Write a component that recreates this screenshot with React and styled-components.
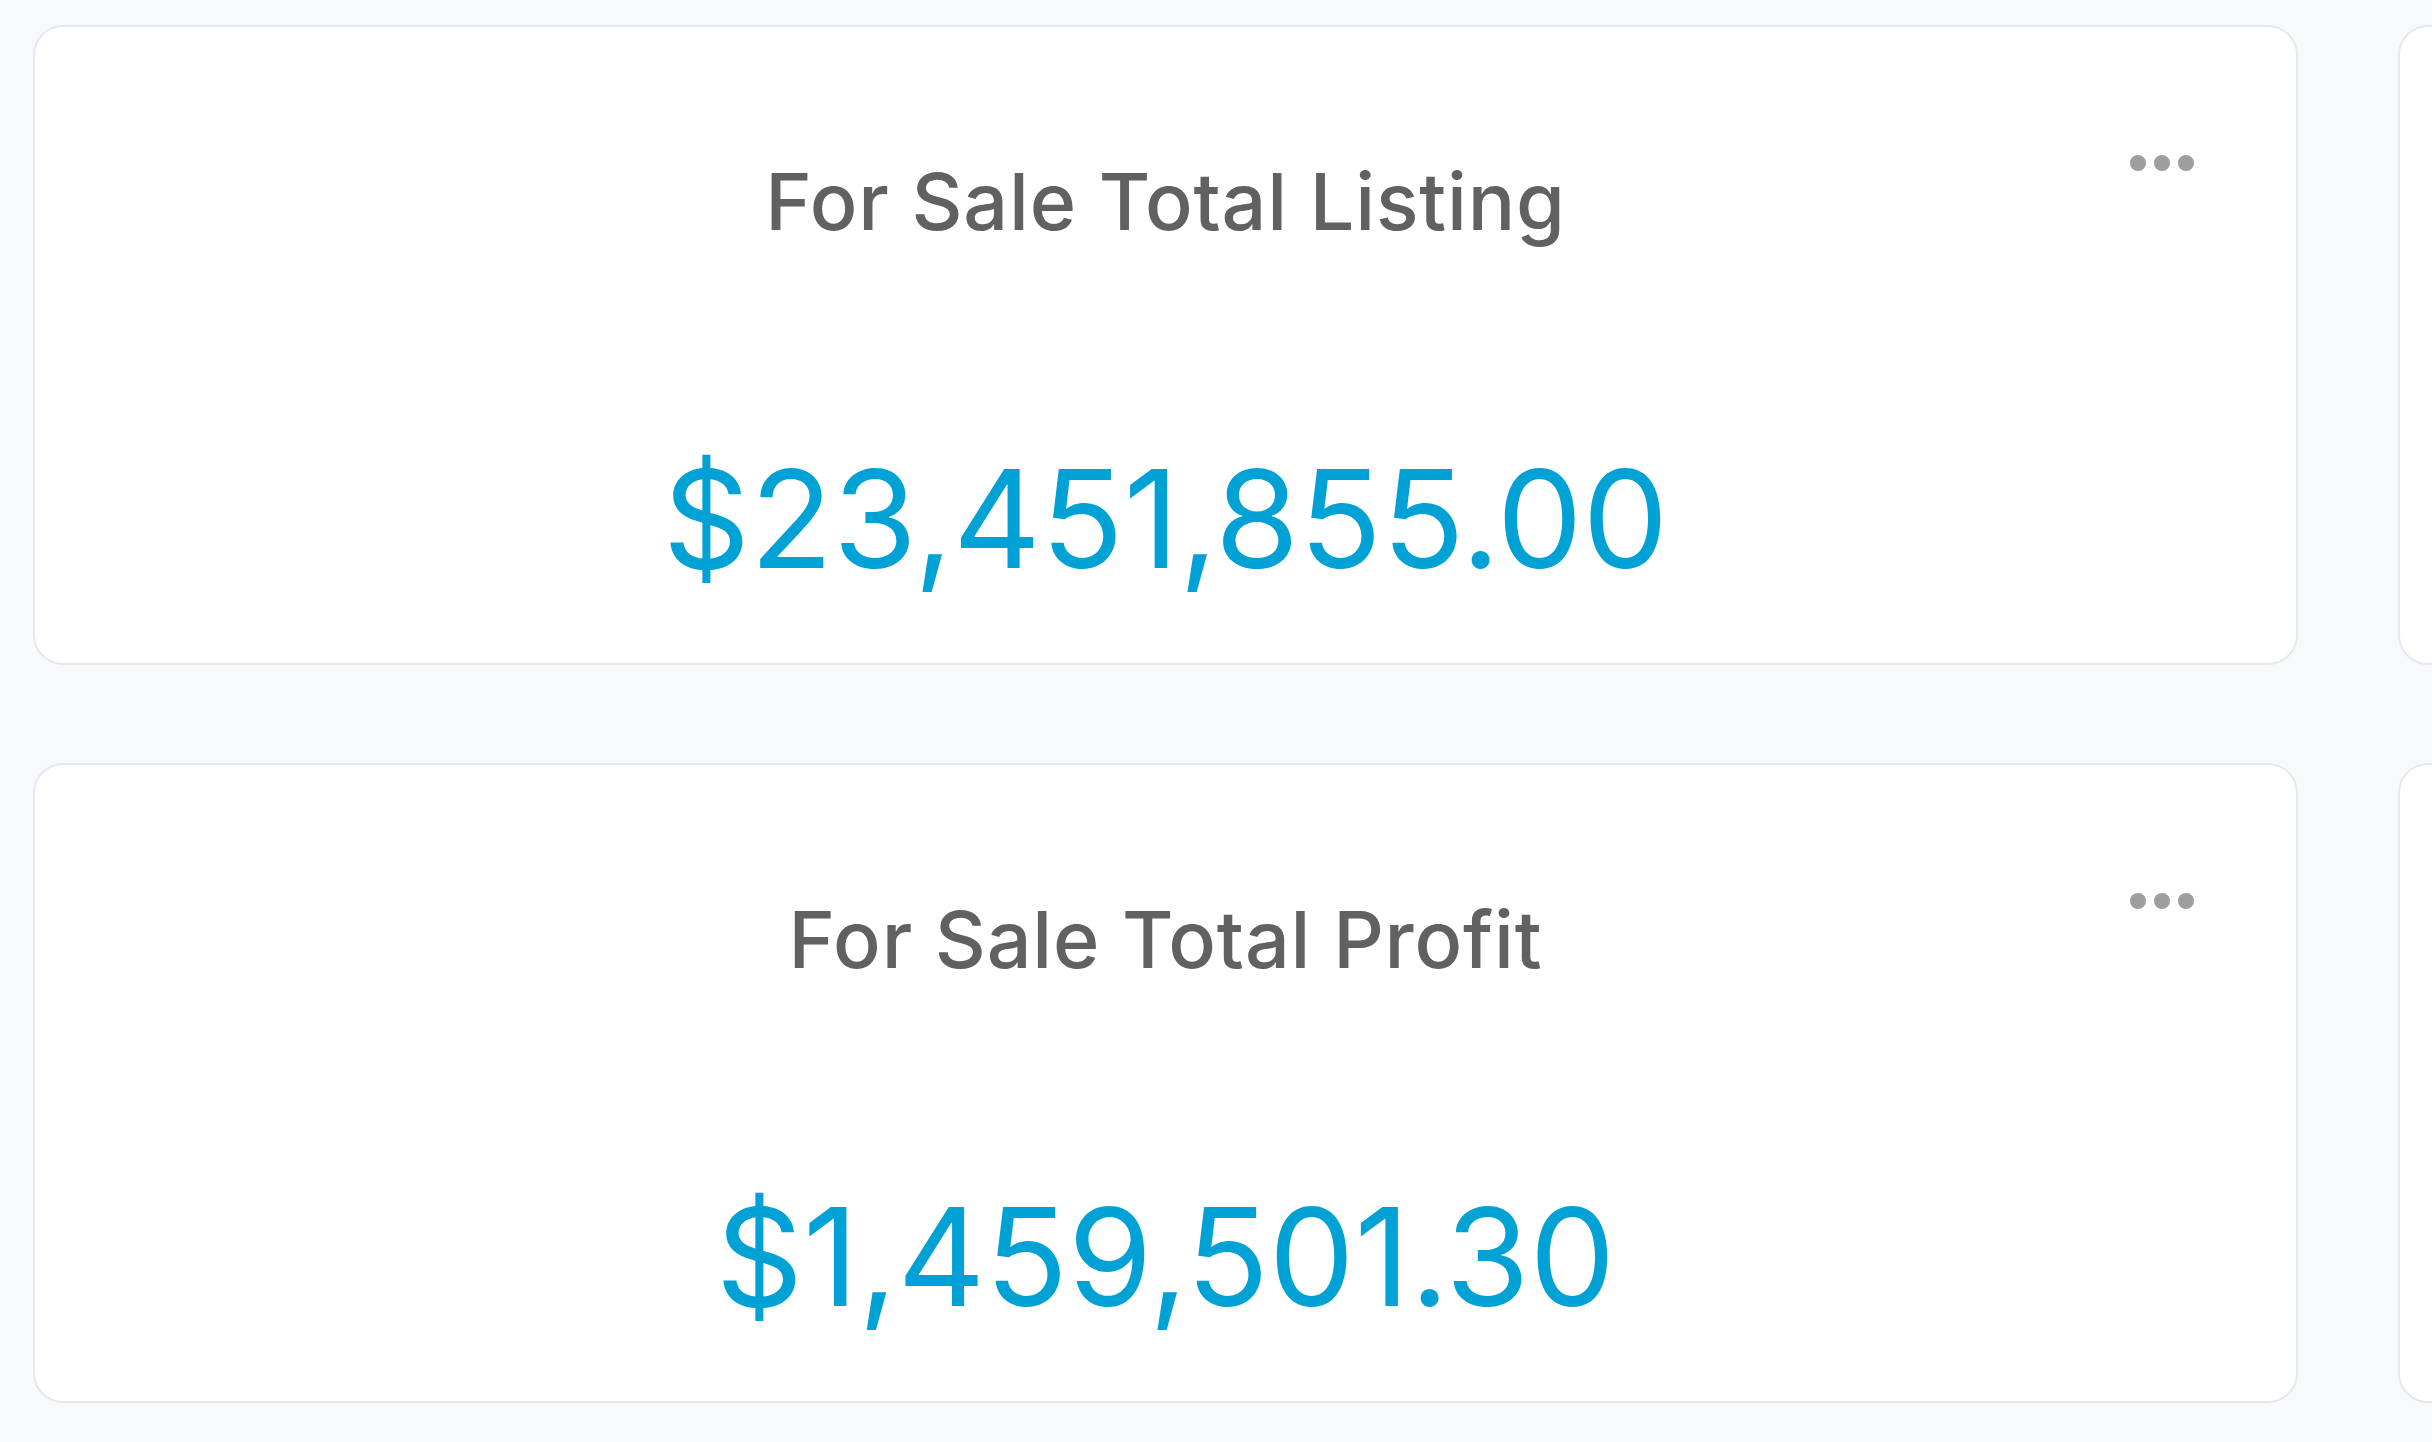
import React from "react";
import styled, { createGlobalStyle } from "styled-components";

const GlobalStyle = createGlobalStyle`
  html, body {
    margin: 0;
    padding: 0;
    background: #f8f9fb;
    overflow: hidden;
  }
  body {
    font-family: Inter, "Noto Sans", "Liberation Sans", sans-serif;
  }
  * { box-sizing: border-box; }
`;

const Page = styled.main`
  padding: 25px 0 0 33px;
  width: max-content;
`;

const Grid = styled.div`
  display: grid;
  grid-template-columns: 2265px 2265px;
  column-gap: 100px;
  row-gap: 98px;
`;

const Card = styled.section`
  background: #ffffff;
  border: 2px solid #e5e8ee;
  border-radius: 30px;
  padding: 126px 102px 62px;
  display: flex;
  flex-direction: column;
  align-items: center;
  gap: 187px;
`;

const Header = styled.header`
  width: 100%;
  display: grid;
  grid-template-columns: 1fr auto 1fr;
  align-items: start;
`;

const Title = styled.h2`
  grid-column: 2;
  margin: 0;
  font-size: 79px;
  font-weight: 500;
  color: #616161;
  line-height: normal;
  white-space: nowrap;
  letter-spacing: 0.8px;
`;

const MenuButton = styled.button`
  grid-column: 3;
  justify-self: end;
  margin-top: 2px;
  padding: 0;
  border: 0;
  background: transparent;
  display: flex;
  cursor: pointer;
`;

const Value = styled.div`
  font-size: 136px;
  font-weight: 400;
  color: #00a2d5;
  line-height: normal;
  white-space: nowrap;
`;

const Dots = () => (
  <svg width="64" height="16" viewBox="0 0 64 16" aria-hidden="true">
    <circle cx="8" cy="8" r="8" fill="#9e9e9e" />
    <circle cx="32" cy="8" r="8" fill="#9e9e9e" />
    <circle cx="56" cy="8" r="8" fill="#9e9e9e" />
  </svg>
);

const stats = [
  { title: "For Sale Total Listing", value: "$23,451,855.00" },
  { title: "For Rent Total Listing", value: "$4,215,300.00" },
  { title: "For Sale Total Profit", value: "$1,459,501.30" },
  { title: "For Rent Total Profit", value: "$312,870.45" },
];

const StatCard = ({ title, value }) => (
  <Card>
    <Header>
      <Title>{title}</Title>
      <MenuButton aria-label="More options">
        <Dots />
      </MenuButton>
    </Header>
    <Value>{value}</Value>
  </Card>
);

export default function App() {
  return (
    <>
      <GlobalStyle />
      <Page>
        <Grid>
          {stats.map((s) => (
            <StatCard key={s.title} {...s} />
          ))}
        </Grid>
      </Page>
    </>
  );
}
